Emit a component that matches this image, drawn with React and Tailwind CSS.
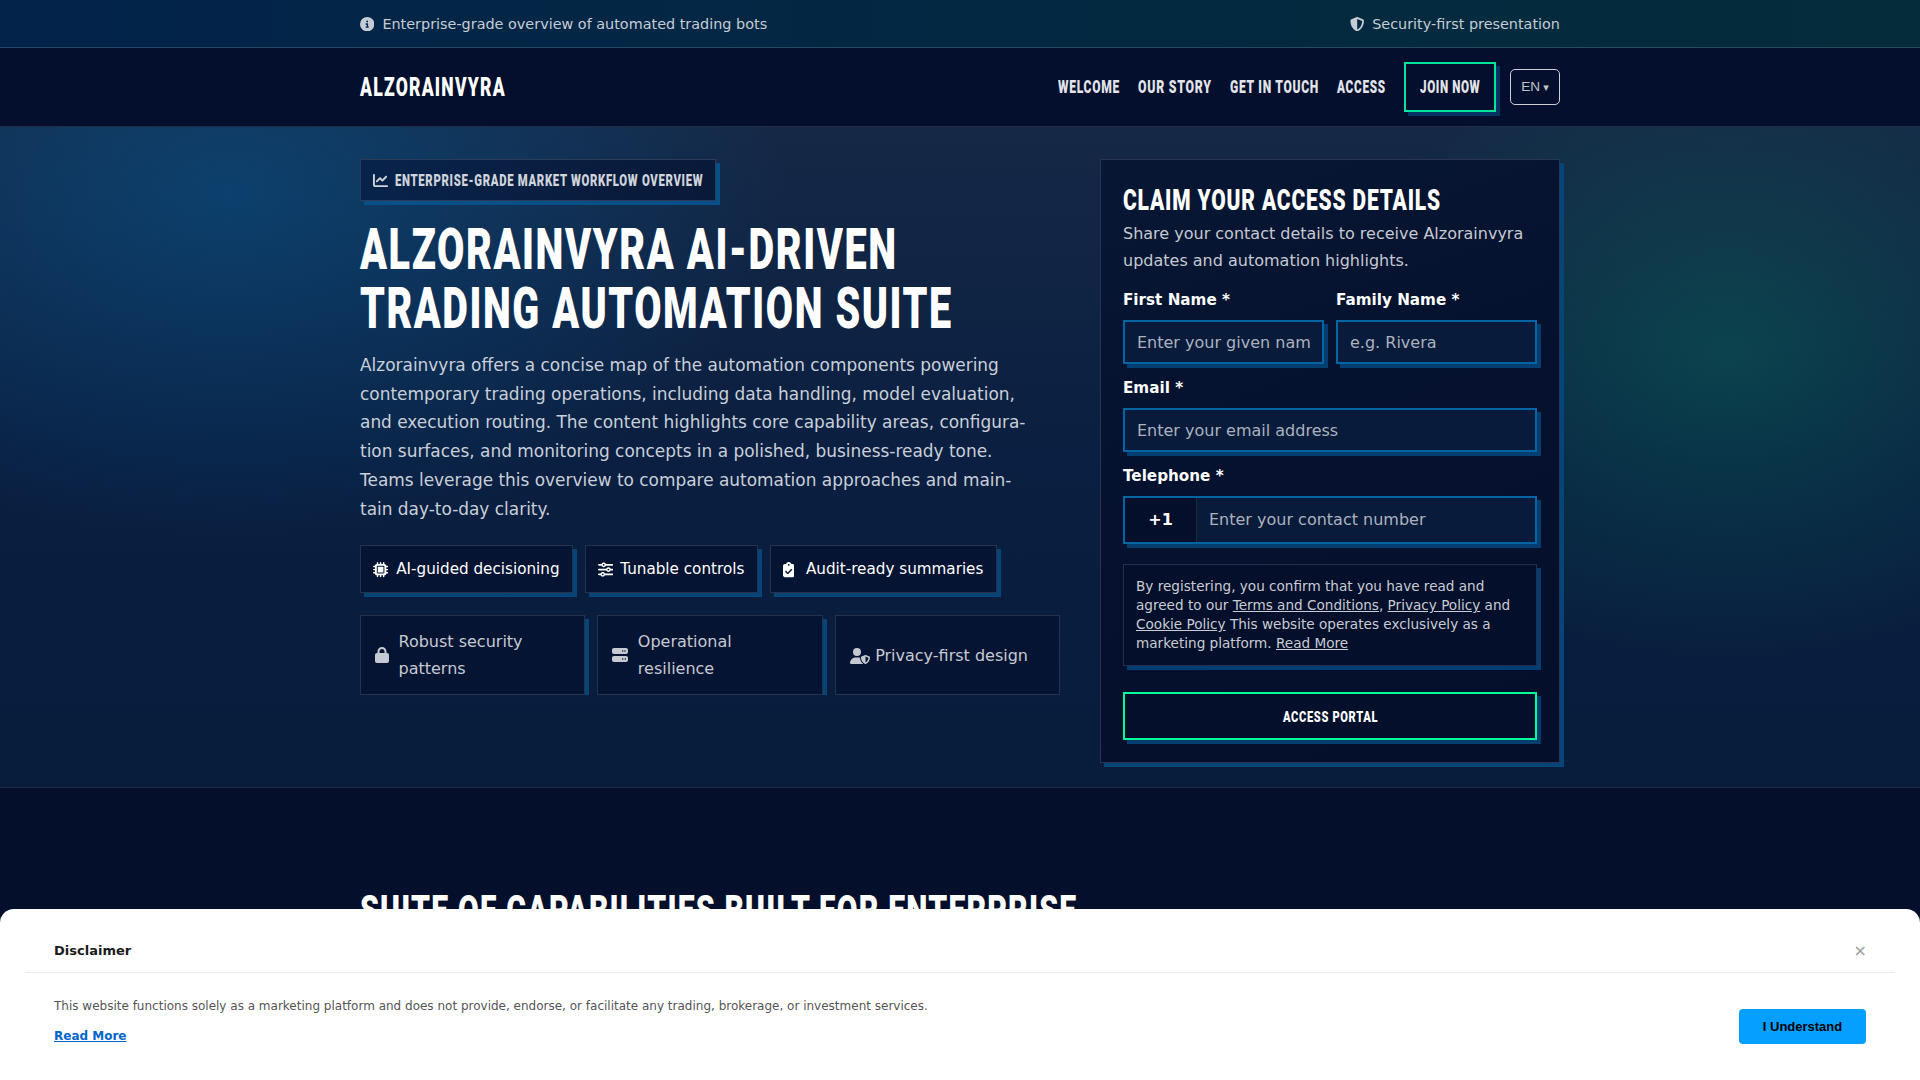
import React, { useLayoutEffect, useRef, useState } from 'react';
import {
  FaCircleInfo,
  FaShieldHalved,
  FaChartLine,
  FaMicrochip,
  FaSliders,
  FaClipboardCheck,
  FaLock,
  FaServer,
  FaUserShield,
} from 'react-icons/fa6';

// Squeezes a heading horizontally so that it fills the width of its box
const Condensed = ({ children, className = '' }) => {
  const boxRef = useRef(null);
  const textRef = useRef(null);
  const [scale, setScale] = useState(1);

  useLayoutEffect(() => {
    const fit = () => setScale(boxRef.current.clientWidth / textRef.current.offsetWidth);
    fit();
    document.fonts.ready.then(fit);
  }, []);

  return (
    <span ref={boxRef} className={`block whitespace-nowrap font-[Roboto,sans-serif] font-black uppercase ${className}`}>
      <span ref={textRef} className="inline-block origin-left" style={{ transform: `scaleX(${scale})` }}>
        {children}
      </span>
    </span>
  );
};

const NAV = [
  { label: 'Welcome', width: 'w-[62px]' },
  { label: 'Our Story', width: 'w-[74px]' },
  { label: 'Get in Touch', width: 'w-[89px]' },
  { label: 'Access', width: 'w-[49px]' },
];

const PILLS = [
  { icon: FaMicrochip, label: 'AI-guided decisioning', width: 'w-[213px]', iconClass: 'w-[15.2px]', gap: 'gap-2' },
  { icon: FaSliders, label: 'Tunable controls', width: 'w-[173px]', iconClass: 'w-[15.2px]', gap: 'gap-[7px]' },
  { icon: FaClipboardCheck, label: 'Audit-ready summaries', width: 'w-[227px]', iconClass: 'w-[11.4px]', gap: 'gap-[11.5px]' },
];

const FEATURES = [
  { icon: FaLock, label: 'Robust security patterns', iconClass: 'w-[14px]', gap: 'gap-[9.5px]' },
  { icon: FaServer, label: 'Operational resilience', iconClass: 'w-[16px]', gap: 'gap-[9.5px]' },
  { icon: FaUserShield, label: 'Privacy-first design', iconClass: 'w-[20px]', gap: 'gap-[5.5px] pt-px' },
];

const TopBar = () => (
  <div className="h-12 border-b border-white/15 bg-linear-to-r from-[#03234a] to-[#042c3a]">
    <div className="mx-auto flex h-full w-[1200px] items-center justify-between pt-px text-[14.4px] text-[#c5ccd5]">
      <div className="flex items-center gap-2">
        <FaCircleInfo className="size-[14.4px]" />
        <span className="pt-px">Enterprise-grade overview of automated trading bots</span>
      </div>
      <div className="flex items-center gap-2">
        <FaShieldHalved className="size-[14.4px]" />
        <span className="pt-px">Security-first presentation</span>
      </div>
    </div>
  </div>
);

const Header = () => (
  <header className="h-[79px] border-b border-white/12 bg-[#040f2d]">
    <div className="mx-auto flex h-full w-[1200px] items-center justify-between">
      <Condensed className="w-[146px] text-[25px] leading-none tracking-[0.07em] text-white">Alzorainvyra</Condensed>
      <nav className="flex items-center text-[17.5px] leading-none text-[#e1e4e9]">
        <div className="mr-[18px] flex gap-[18px] pt-0.5">
          {NAV.map((item) => (
            <a key={item.label} href="#">
              <Condensed className={`${item.width} tracking-[0.06em]`}>{item.label}</Condensed>
            </a>
          ))}
        </div>
        <a href="#" className="mr-[14px] flex h-[50px] w-[92px] items-center justify-center border-2 border-[#00e599] pt-0.5 shadow-[4px_4px_0_#043464]">
          <Condensed className="w-[60px] tracking-[0.05em]">Join Now</Condensed>
        </a>
        <button className="flex h-9 w-[50px] items-center justify-center gap-[3px] rounded-[5px] border border-[#cdcfd5] font-['Liberation_Sans',sans-serif] text-[13.6px] text-[#bfc2ca]">
          EN <span className="font-['DejaVu_Sans',sans-serif] text-[11px]">▾</span>
        </button>
      </nav>
    </div>
  </header>
);

const Field = ({ label, placeholder }) => (
  <label className="block min-w-0">
    <span className="block h-[44px] pt-[11px] text-[15.2px] font-bold leading-[27px] text-white">{label} *</span>
    <input
      placeholder={placeholder}
      className="block h-[44px] w-full border-2 border-[#0464a4] bg-[#081b3a] px-3 text-white shadow-[4px_4px_0_#043e70] placeholder:text-[#abb2be]"
    />
  </label>
);

const SignupCard = () => (
  <form className="h-[604px] w-[460px] border border-[#29344e] bg-[linear-gradient(160deg,#071733_0%,#05112e_50%,#040f2b_100%)] px-[22px] pt-[22px] shadow-[4px_4px_0_#064577]">
    <Condensed className="mb-0.5 w-[318px] pt-px text-[29px] leading-[35px] tracking-[0.04em] text-white">Claim your access details</Condensed>
    <p className="mb-0.5 leading-[27.2px] text-[#c5c9d1]">Share your contact details to receive Alzorainvyra updates and automation highlights.</p>
    <div className="grid grid-cols-2 gap-3">
      <Field label="First Name" placeholder="Enter your given name" />
      <Field label="Family Name" placeholder="e.g. Rivera" />
    </div>
    <Field label="Email" placeholder="Enter your email address" />
    <div className="h-[44px] pt-[11px] text-[15.2px] font-bold leading-[27px] text-white">Telephone *</div>
    <div className="flex h-[48px] border-2 border-[#0464a4] bg-[#081b3a] shadow-[4px_4px_0_#043e70]">
      <div className="flex w-[72px] items-center justify-center border-r border-[#1d2946] bg-[#040f2b] font-bold text-white">+1</div>
      <input placeholder="Enter your contact number" className="min-w-0 flex-1 px-3 placeholder:text-[#abb2be]" />
    </div>
    <div className="mt-5 h-[102px] border border-[#242e4a] bg-[#030f2b] px-3 pt-[12px] text-[13.6px] leading-[19px] text-[#c9ccd3] shadow-[4px_4px_0_#043e70]">
      By registering, you confirm that you have read and agreed to our <a href="#" className="underline">Terms and Conditions</a>,{' '}
      <a href="#" className="underline">Privacy Policy</a> and <a href="#" className="underline">Cookie Policy</a> This website operates
      exclusively as a marketing platform. <a href="#" className="underline">Read More</a>
    </div>
    <button
      type="button"
      className="mt-[26px] flex h-[48px] w-full items-center justify-center border-2 border-[#00ff99] bg-[#040f2c] pt-0.5 text-[15.5px] leading-none text-white shadow-[4px_4px_0_#043e70]"
    >
      <Condensed className="w-[95px] tracking-[0.06em]">Access Portal</Condensed>
    </button>
  </form>
);

const Hero = () => (
  <section className="h-[661px] border-b border-[#1c2a49] bg-[radial-gradient(560px_350px_at_12%_10%,rgba(0,110,180,0.36)_0%,transparent_100%),radial-gradient(420px_310px_at_90%_34%,rgba(0,200,120,0.20)_0%,transparent_100%),linear-gradient(180deg,#152846_0%,#0a1f41_50%,#081d3c_100%)]">
    <div className="mx-auto flex w-[1200px] gap-10 pt-8">
      <div className="w-[700px]">
        <div className="flex h-[42px] w-[356px] items-center border border-[#2c3b58] bg-linear-to-r from-[#08234a] to-[#091939] px-3 text-[#d0d4db] shadow-[4px_4px_0_#0a5088]">
          <FaChartLine className="mr-[7px] size-[15px] shrink-0" />
          <Condensed className="w-[308px] shrink-0 pt-px text-[17.2px] leading-none tracking-[0.06em]">Enterprise-grade market workflow overview</Condensed>
        </div>
        <h1 className="mt-[19px] text-[57.5px] leading-[59px] tracking-[0.04em] text-white">
          <Condensed className="w-[538px]">Alzorainvyra AI-driven</Condensed>
          <Condensed className="w-[593px]">trading automation suite</Condensed>
        </h1>
        <p className="mt-[13px] h-[173px] text-[16.96px] leading-[28.7px] text-[#c9cfd8]">
          Alzorainvyra offers a concise map of the automation components powering
          <br />
          contemporary trading operations, including data handling, model evaluation,
          <br />
          and execution routing. The content highlights core capability areas, configura-
          <br />
          tion surfaces, and monitoring concepts in a polished, business-ready tone.
          <br />
          Teams leverage this overview to compare automation approaches and main-
          <br />
          tain day-to-day clarity.
        </p>
        <div className="mt-[21px] flex gap-3">
          {PILLS.map(({ icon: Icon, label, width, iconClass, gap }) => (
            <div
              key={label}
              className={`flex h-12 items-center whitespace-nowrap border border-[#27324d] bg-[#051433] px-3 text-[15.2px] text-white shadow-[4px_4px_0_#064577] ${width} ${gap}`}
            >
              <Icon className={`mt-0.5 h-[15.2px] shrink-0 ${iconClass}`} />
              {label}
            </div>
          ))}
        </div>
        <div className="mt-[22px] grid grid-cols-3 gap-3 overflow-hidden">
          {FEATURES.map(({ icon: Icon, label, iconClass, gap }) => (
            <div
              key={label}
              className={`flex h-20 items-center border border-[#26314c] bg-[#051433] px-[14px] leading-[27.2px] text-[#c5c9d1] shadow-[4px_4px_0_#064577] ${gap}`}
            >
              <Icon className={`h-4 shrink-0 ${iconClass}`} />
              <span>{label}</span>
            </div>
          ))}
        </div>
      </div>
      <SignupCard />
    </div>
  </section>
);

const Disclaimer = () => (
  <div className="absolute inset-x-0 bottom-0 h-[171px] rounded-t-[14px] bg-white px-[25px]">
    <div className="flex h-[64px] items-center justify-between border-b border-[#ebebeb] px-[29px] pt-[20px]">
      <span className="pt-px text-[13px] font-bold text-[#1a1a1a]">Disclaimer</span>
      <button className="-mr-px pt-px text-[16px] leading-none text-[#999]">×</button>
    </div>
    <div className="flex justify-between px-[29px] text-xs">
      <div className="pt-[23px]">
        <p className="leading-[20px] text-[#555]">
          This website functions solely as a marketing platform and does not provide, endorse, or facilitate any trading, brokerage, or investment services.
        </p>
        <a href="#" className="mt-[10px] block font-bold leading-[20px] text-[#0066cc] underline">
          Read More
        </a>
      </div>
      <button className="mt-9 h-[35px] w-[127px] rounded-[4px] bg-[#059fff] font-['Liberation_Sans',sans-serif] text-[13px] font-bold text-black">
        I Understand
      </button>
    </div>
  </div>
);

export default function App() {
  return (
    <div className="relative h-[1080px] w-full overflow-hidden bg-[#040f2c] font-['DejaVu_Sans',sans-serif] text-base">
      <TopBar />
      <Header />
      <Hero />
      <section className="mx-auto w-[1200px] pt-[98px]">
        <h2 className="text-[41px] leading-[48px] tracking-[0.04em] text-white">
          <Condensed className="w-[717px]">Suite of capabilities built for enterprise</Condensed>
        </h2>
      </section>
      <Disclaimer />
    </div>
  );
}
